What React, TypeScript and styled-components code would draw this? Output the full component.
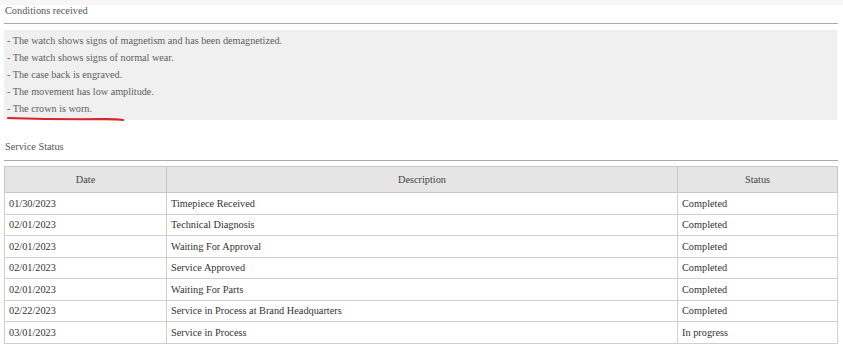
import * as React from 'react';
import styled, { createGlobalStyle } from 'styled-components';

const serif = `"Times New Roman", "Liberation Serif", Tinos, "DejaVu Serif", serif`;

const GlobalStyle = createGlobalStyle`
    body {
        margin: 0;
        background: #ffffff;
        font-family: ${serif};
    }
`;

const TopStrip = styled.div`
    height: 5px;
    background: #f7f5f5;
`;

const Page = styled.div`
    padding: 0 5px 0 4px;
    font-family: ${serif};
`;

const Label = styled.div<{ $top: number }>`
    font-size: 10.3px;
    line-height: 12px;
    color: #555555;
    padding: ${(p) => p.$top}px 0 0 1px;
`;

const Rule = styled.div<{ $gap: number }>`
    margin-top: ${(p) => p.$gap}px;
    border-top: 1px solid #a9a9a9;
`;

const ConditionsBox = styled.div`
    position: relative;
    margin: 6px 1px 0 0;
    padding: 2px 0 3px 3px;
    background: #f0f0f0;
`;

const ConditionLine = styled.div`
    font-size: 10.2px;
    line-height: 17px;
    color: #5e5e5e;
`;

const Scribble = styled.svg`
    position: absolute;
    left: 3px;
    bottom: -2px;
    width: 118px;
    height: 6px;
    overflow: visible;
`;

const Table = styled.table`
    width: 100%;
    margin-top: 5px;
    border-collapse: collapse;
    table-layout: fixed;
    font-family: ${serif};
    font-size: 10.3px;
    color: #333333;
`;

const HeadCell = styled.th<{ $width?: number }>`
    width: ${(p) => (p.$width ? `${p.$width}px` : 'auto')};
    height: 25px;
    padding: 0;
    font-weight: normal;
    text-align: center;
    background: #e5e5e5;
    color: #444444;
    border: 1px solid #c8c8c8;
`;

const Cell = styled.td`
    height: 20.5px;
    padding: 0 4px;
    border: 1px solid #cfcfcf;
    white-space: nowrap;
`;

const conditions = [
    '- The watch shows signs of magnetism and has been demagnetized.',
    '- The watch shows signs of normal wear.',
    '- The case back is engraved.',
    '- The movement has low amplitude.',
    '- The crown is worn.',
];

const steps = [
    { date: '01/30/2023', desc: 'Timepiece Received', status: 'Completed' },
    { date: '02/01/2023', desc: 'Technical Diagnosis', status: 'Completed' },
    { date: '02/01/2023', desc: 'Waiting For Approval', status: 'Completed' },
    { date: '02/01/2023', desc: 'Service Approved', status: 'Completed' },
    { date: '02/01/2023', desc: 'Waiting For Parts', status: 'Completed' },
    { date: '02/22/2023', desc: 'Service in Process at Brand Headquarters', status: 'Completed' },
    { date: '03/01/2023', desc: 'Service in Process', status: 'In progress' },
];

export default function App() {
    return (
        <>
            <GlobalStyle />
            <TopStrip />
            <Page>
                <Label $top={0}>Conditions received</Label>
                <Rule $gap={6} />
                <ConditionsBox>
                    {conditions.map((c) => (
                        <ConditionLine key={c}>{c}</ConditionLine>
                    ))}
                    <Scribble viewBox="0 0 118 6">
                        <path
                            d="M1 2 C 30 3, 68 3.4, 92 3.2 S 112 3.6, 116 4"
                            fill="none"
                            stroke="#d8262b"
                            strokeWidth="2.2"
                            strokeLinecap="round"
                        />
                    </Scribble>
                </ConditionsBox>
                <Label $top={21}>Service Status</Label>
                <Rule $gap={7} />
                <Table>
                    <thead>
                        <tr>
                            <HeadCell $width={161}>Date</HeadCell>
                            <HeadCell>Description</HeadCell>
                            <HeadCell $width={159}>Status</HeadCell>
                        </tr>
                    </thead>
                    <tbody>
                        {steps.map((s, i) => (
                            <tr key={i}>
                                <Cell>{s.date}</Cell>
                                <Cell>{s.desc}</Cell>
                                <Cell>{s.status}</Cell>
                            </tr>
                        ))}
                    </tbody>
                </Table>
            </Page>
        </>
    );
}
